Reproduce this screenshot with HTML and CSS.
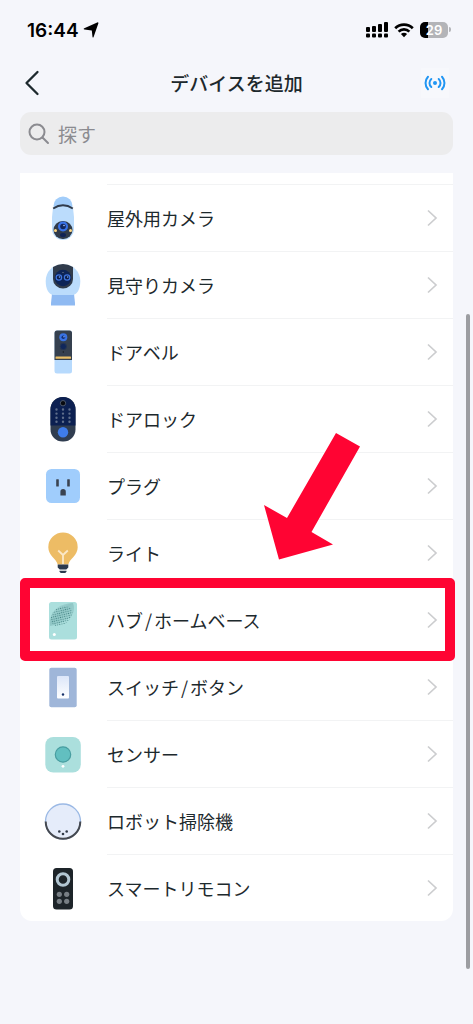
FILE: index.html
```
<!DOCTYPE html>
<html lang="ja">
<head>
    <meta charset="UTF-8">
    <meta name="viewport" content="width=device-width, initial-scale=1.0">
    <title>デバイスを追加</title>
    <link rel="stylesheet" href="styles.css">
</head>
<body>
    <div class="status-bar">
        <span class="clock">16:44</span>
        <svg class="location" width="16" height="16" viewBox="0 0 16 16"><path d="M15.400 1.200 10.600 15q-.6 1.200-1.100-.1L8.800 8.400 1.400 7.500q-1.400-.5-.1-1.200L14.200.4q1.300-.4 1.200.8z" fill="#000"/></svg>
        <div class="status-icons">
            <svg width="22" height="16" viewBox="0 0 22 16">
                <g fill="#000">
                    <rect x="0" y="5" width="4" height="5" rx="1"/><rect x="6" y="4" width="4" height="6" rx="1"/>
                    <rect x="12" y="2" width="4" height="8" rx="1"/><rect x="18" y="0" width="4" height="10" rx="1"/>
                    <rect x="0" y="11.500" width="4" height="4" rx="1"/><rect x="6" y="11.500" width="4" height="4" rx="1"/>
                    <rect x="12" y="11.500" width="4" height="4" rx="1"/><rect x="18" y="11.500" width="4" height="4" rx="1"/>
                </g>
            </svg>
            <svg width="20" height="16" viewBox="0 0 20 16">
                <path d="M1.200 6.200a12.600 12.600 0 0 1 17.600 0M4.600 9.600a7.800 7.800 0 0 1 10.800 0" fill="none" stroke="#000" stroke-width="2.700"/>
                <path d="M10 15.200 6.900 12.100a4.500 4.500 0 0 1 6.200 0z" fill="#000"/>
            </svg>
            <span class="battery">29</span>
        </div>
    </div>

    <header class="header">
        <button type="button" class="icon-button back" aria-label="戻る">
            <svg width="16" height="26" viewBox="0 0 16 26"><path d="M13.500 2 2.500 13l11 11" fill="none" stroke="#1d292d" stroke-width="2.300" stroke-linecap="round" stroke-linejoin="round"/></svg>
        </button>
        <h1>デバイスを追加</h1>
        <button type="button" class="icon-button scan" aria-label="近くのデバイスを検索">
            <svg width="22" height="18" viewBox="0 0 22 18">
                <g fill="none" stroke="#2196f3" stroke-width="2" stroke-linecap="round">
                    <path d="M7.300 5a5.300 5.300 0 0 0 0 8M14.700 5a5.300 5.300 0 0 1 0 8"/>
                    <path d="M4 2.700a9.300 9.300 0 0 0 0 12.600M18 2.700a9.300 9.300 0 0 1 0 12.600"/>
                </g>
                <circle cx="11" cy="9" r="2" fill="#2196f3"/>
            </svg>
        </button>
    </header>

    <form class="search">
        <svg width="22" height="22" viewBox="0 0 22 22"><g fill="none" stroke="#8b8b90" stroke-width="2" stroke-linecap="round"><circle cx="9" cy="9" r="7.500"/><path d="m14.500 14.500 5.500 5.500"/></g></svg>
        <input type="search" placeholder="探す" aria-label="探す">
    </form>

    <main>
        <ul class="device-list">
            <li>
                <a href="#outdoor">
                    <svg class="device" viewBox="0 0 48 48">
                        <circle cx="24" cy="12" r="9.500" fill="#a2cdfa"/>
                        <path d="M14 14q10-6 20 0l1 9v12a11 11 0 0 1-22 0V23z" fill="#bbdcfc"/>
                        <path d="M14.200 14.500q9.800-6.500 19.600 0" fill="none" stroke="#303b4b" stroke-width="2"/>
                        <rect x="14.500" y="27" width="19" height="18" rx="9" fill="#303b4b"/>
                        <circle cx="24" cy="32.500" r="5" fill="#3973e9"/><circle cx="24" cy="32.500" r="2.800" fill="#12275d"/>
                        <circle cx="25" cy="31.500" r=".8" fill="#a9c9ff"/>
                        <ellipse cx="24" cy="41" rx="3" ry="2" fill="#102355"/>
                        <circle cx="16.500" cy="36.500" r="1.500" fill="#ffd883"/><circle cx="31.500" cy="36.500" r="1.500" fill="#ffd883"/>
                    </svg>
                    <span class="name">屋外用カメラ</span>
                    <svg class="chevron" viewBox="0 0 12 18"><path d="m2 1.500 8 7.500-8 7.500"/></svg>
                </a>
            </li>
            <li>
                <a href="#indoor">
                    <svg class="device" viewBox="0 0 48 48">
                        <path d="M13 33h22l1 9v2.500H12V42z" fill="#8fbaf2"/>
                        <path d="M24 3.500C13 3.500 6.700 11 6.700 20S10 33 14 34h20c4-1 7.300-5 7.300-14S35 3.500 24 3.500z" fill="#bbdcfc"/>
                        <path d="M14 6q10-6 20 0v12a10 9.500 0 0 1-20 0z" fill="#303b4b"/>
                        <circle cx="24" cy="17" r="8.300" fill="#0d2457"/>
                        <g fill="#0b1c48" stroke="#4076df" stroke-width="1.200"><circle cx="19.900" cy="16.500" r="2.700"/><circle cx="28.100" cy="16.500" r="2.700"/></g>
                        <circle cx="20.500" cy="16" r=".8" fill="#83aff9"/><circle cx="28.700" cy="16" r=".8" fill="#83aff9"/>
                        <circle cx="24" cy="11.500" r=".6" fill="#89949e"/>
                    </svg>
                    <span class="name">見守りカメラ</span>
                    <svg class="chevron" viewBox="0 0 12 18"><path d="m2 1.500 8 7.500-8 7.500"/></svg>
                </a>
            </li>
            <li>
                <a href="#doorbell">
                    <svg class="device" viewBox="0 0 48 48">
                        <rect x="15.500" y="2.500" width="17.500" height="43" rx="2.500" fill="#b7dafd"/>
                        <path d="M15.500 32V5a2.500 2.500 0 0 1 2.500-2.500h12.500A2.500 2.500 0 0 1 33 5v27z" fill="#35404f"/>
                        <circle cx="24.300" cy="9.300" r="4" fill="#3973e5"/><circle cx="24.300" cy="9.300" r="1.800" fill="#102e78"/><circle cx="25" cy="8.800" r=".7" fill="#9dc3ff"/>
                        <circle cx="24.300" cy="18.500" r="3.200" fill="#10275b" stroke="#263653"/>
                        <circle cx="24.300" cy="24" r=".7" fill="#17191e"/>
                        <rect x="16.500" y="28.500" width="15.500" height="2.300" rx=".5" fill="#e9be66"/>
                    </svg>
                    <span class="name">ドアベル</span>
                    <svg class="chevron" viewBox="0 0 12 18"><path d="m2 1.500 8 7.500-8 7.500"/></svg>
                </a>
            </li>
            <li>
                <a href="#lock">
                    <svg class="device" viewBox="0 0 48 48">
                        <rect x="11.500" y="2" width="25" height="44.500" rx="12" fill="#303d50"/>
                        <path d="M11.500 30.500V14.500a12.500 12.500 0 0 1 25 0v16z" fill="#0c2051"/>
                        <circle cx="24" cy="8.200" r="2.700" fill="#080a0f" stroke="#49556a"/>
                        <g fill="none" stroke="#5f6e8b" stroke-width="2.400" stroke-linecap="round" stroke-dasharray="0 4.100"><path d="M17.500 14.500v13M24 14.500v13M30.500 14.500v13"/></g>
                        <circle cx="24" cy="37.200" r="5.200" fill="#3f7ce9"/>
                    </svg>
                    <span class="name">ドアロック</span>
                    <svg class="chevron" viewBox="0 0 12 18"><path d="m2 1.500 8 7.500-8 7.500"/></svg>
                </a>
            </li>
            <li>
                <a href="#plug">
                    <svg class="device" viewBox="0 0 48 48">
                        <rect x="7" y="7" width="34" height="34" rx="5.500" fill="#a0cdfc"/>
                        <g fill="#3a4350"><rect x="17.200" y="17.200" width="2.600" height="7.300" rx=".5"/><rect x="28.200" y="17.200" width="2.600" height="7.300" rx=".5"/>
                        <path d="M21.400 33.500v-3.700a2.700 2.700 0 0 1 5.400 0v3.700z"/></g>
                    </svg>
                    <span class="name">プラグ</span>
                    <svg class="chevron" viewBox="0 0 12 18"><path d="m2 1.500 8 7.500-8 7.500"/></svg>
                </a>
            </li>
            <li>
                <a href="#light">
                    <svg class="device" viewBox="0 0 48 48">
                        <path d="M24 3.500A14.700 14.700 0 0 0 9.300 18.200c0 8.300 7.700 11 9.400 17.300h10.600c1.700-6.300 9.400-9 9.400-17.300A14.700 14.700 0 0 0 24 3.500z" fill="#edbc65"/>
                        <path d="M24 35V26l-4.800-4.500M24 26l4.800-4.500" fill="none" stroke="#fbe8c8" stroke-width="1.800"/>
                        <path d="M18.700 35.500h10.600v3l-2 2h-6.600l-2-2zM20.500 41.700h7v1l-1.300 1.300h-4.400l-1.300-1.300z" fill="#2c3a4e"/>
                    </svg>
                    <span class="name">ライト</span>
                    <svg class="chevron" viewBox="0 0 12 18"><path d="m2 1.500 8 7.500-8 7.500"/></svg>
                </a>
            </li>
            <li class="highlighted">
                <a href="#hub">
                    <svg class="device" viewBox="0 0 48 48">
                        <defs>
                            <pattern id="grille" width="2.200" height="2.200" patternUnits="userSpaceOnUse" patternTransform="rotate(25)"><circle cx="1.100" cy="1.100" r=".6" fill="#3d7e7e"/></pattern>
                            <linearGradient id="hubShade" x1="0" y1="0" x2="1" y2="1"><stop offset="0" stop-color="#b1e0df"/><stop offset=".45" stop-color="#8fc6c5"/><stop offset="1" stop-color="#abdfdd"/></linearGradient>
                        </defs>
                        <rect x="10" y="6" width="28" height="37.500" rx="2.500" fill="#abdfdd"/>
                        <path d="M11 24Q14 8 34 7q4 11-7 17-8 5-16 6z" fill="url(#hubShade)"/>
                        <ellipse cx="22.500" cy="20" rx="12" ry="8.500" transform="rotate(-38 22.500 20)" fill="url(#grille)"/>
                        <circle cx="15.300" cy="38.500" r="1.500" fill="#fff"/>
                    </svg>
                    <span class="name">ハブ<span class="slash">/</span>ホームベース</span>
                    <svg class="chevron" viewBox="0 0 12 18"><path d="m2 1.500 8 7.500-8 7.500"/></svg>
                </a>
                <svg class="arrow" width="96" height="127" viewBox="0 0 96 127" aria-hidden="true"><path d="M72 0 96 13.500 47.500 99l21.500 12.500L15 126.500 0 72l23 13z" fill="#ff0433"/></svg>
            </li>
            <li>
                <a href="#switch">
                    <svg class="device" viewBox="0 0 48 48">
                        <defs><linearGradient id="switchFace" x1="0" y1="0" x2="0" y2="1"><stop offset="0" stop-color="#dce6f9"/><stop offset="1" stop-color="#fff"/></linearGradient></defs>
                        <rect x="10.300" y="4.800" width="27.400" height="39.400" rx="2" fill="#9fb6d9"/>
                        <rect x="18" y="13" width="12" height="22.500" rx="1" fill="url(#switchFace)"/>
                        <circle cx="24" cy="31.500" r="1.200" fill="#173069"/>
                    </svg>
                    <span class="name">スイッチ<span class="slash">/</span>ボタン</span>
                    <svg class="chevron" viewBox="0 0 12 18"><path d="m2 1.500 8 7.500-8 7.500"/></svg>
                </a>
            </li>
            <li>
                <a href="#sensor">
                    <svg class="device" viewBox="0 0 48 48">
                        <rect x="6.300" y="7" width="35.500" height="35.500" rx="8" fill="#abdfdd"/>
                        <circle cx="24" cy="24.500" r="7.700" fill="#62bfc0" stroke="#489da0" stroke-width="1.200"/>
                        <circle cx="24" cy="36.300" r="1.400" fill="#fff"/>
                    </svg>
                    <span class="name">センサー</span>
                    <svg class="chevron" viewBox="0 0 12 18"><path d="m2 1.500 8 7.500-8 7.500"/></svg>
                </a>
            </li>
            <li>
                <a href="#vacuum">
                    <svg class="device" viewBox="0 0 48 48">
                        <circle cx="24" cy="24.500" r="17.500" fill="#e5ecfa" stroke="#9bb9e5" stroke-width="1.300"/>
                        <path d="M6.700 24.500a17.300 17.300 0 0 0 34.600 0" fill="none" stroke="#454950" stroke-width="2"/>
                        <g fill="#303947"><circle cx="20.300" cy="34.500" r="1.300"/><circle cx="24" cy="37" r="1.300"/><circle cx="27.700" cy="34.500" r="1.300"/></g>
                    </svg>
                    <span class="name">ロボット掃除機</span>
                    <svg class="chevron" viewBox="0 0 12 18"><path d="m2 1.500 8 7.500-8 7.500"/></svg>
                </a>
            </li>
            <li>
                <a href="#remote">
                    <svg class="device" viewBox="0 0 48 48">
                        <rect x="14" y="4" width="20" height="41.500" rx="3.500" fill="#1d2429"/>
                        <circle cx="24" cy="15.500" r="5.800" fill="none" stroke="#b2c6d2" stroke-width="3"/>
                        <g fill="#777e84"><circle cx="20.300" cy="30.300" r="2.600"/><circle cx="27.700" cy="30.300" r="2.600"/><circle cx="20.300" cy="37.300" r="2.600"/><circle cx="27.700" cy="37.300" r="2.600"/></g>
                    </svg>
                    <span class="name">スマートリモコン</span>
                    <svg class="chevron" viewBox="0 0 12 18"><path d="m2 1.500 8 7.500-8 7.500"/></svg>
                </a>
            </li>
        </ul>
    </main>
    <div class="scroll-thumb"></div>
</body>
</html>
```
FILE: styles.css
```
* {
    box-sizing: border-box;
}
body {
    position: relative;
    min-height: 100vh;
    margin: 0;
    padding: 0 20px 40px;
    background-color: #f5f6fb;
    color: #1d292d;
    font-family: Inter, "Noto Sans CJK JP", sans-serif;
}
svg {
    display: block;
    flex-shrink: 0;
}
.status-bar {
    display: flex;
    align-items: center;
    height: 60px;
    padding: 0 5px 0 7px;
    color: #000;
}
.clock {
    font-size: 19px;
    font-weight: 600;
}
.location {
    margin-left: 4px;
}
.status-icons {
    display: flex;
    align-items: center;
    gap: 6px;
    margin-left: auto;
}
.battery {
    position: relative;
    width: 28px;
    height: 16px;
    border-radius: 5px;
    background: linear-gradient(to right, #000 30%, #b3b4b8 30%);
    color: #fff;
    font-size: 13px;
    font-weight: 600;
    line-height: 16px;
    text-align: center;
}
.battery::after {
    content: "";
    position: absolute;
    top: 5px;
    right: -3px;
    width: 2px;
    height: 5px;
    border-radius: 0 2px 2px 0;
    background-color: #b3b4b8;
}
.header {
    display: flex;
    align-items: center;
    justify-content: space-between;
    height: 46px;
}
.header h1 {
    margin: 0;
    font-family: "Noto Sans CJK JP", sans-serif;
    font-size: 19px;
    font-weight: 500;
    line-height: 28px;
}
.icon-button {
    display: flex;
    align-items: center;
    width: 32px;
    height: 30px;
    padding: 0;
    border: 0;
    background: none;
    cursor: pointer;
}
.back {
    padding-left: 4px;
}
.scan {
    justify-content: center;
    width: 28px;
    margin-right: 4px;
    background-color: #f7f8fc;
}
.search {
    display: flex;
    align-items: center;
    gap: 8px;
    height: 43px;
    margin: 6px 0 18px;
    padding: 0 8px;
    border-radius: 11px;
    background-color: #ececed;
}
.search input {
    flex: 1;
    min-width: 0;
    padding: 0;
    border: 0;
    outline: none;
    background: none;
    color: #1d292d;
    font-family: "Noto Sans CJK JP", sans-serif;
    font-size: 19px;
}
.search input::placeholder {
    color: #8b8b90;
}
.device-list {
    margin: 0;
    padding: 11px 0 0;
    border-radius: 0 0 12px 12px;
    background-color: #fff;
    list-style: none;
}
.device-list li {
    position: relative;
}
.device-list a {
    display: grid;
    grid-template-columns: 48px 1fr 12px;
    column-gap: 20px;
    align-items: center;
    height: 67px;
    padding: 0 15px 0 19px;
    /* divider starts under the text */
    background: linear-gradient(#f2f3f4, #f2f3f4) 87px 0 / 100% 1px no-repeat;
    color: inherit;
    text-decoration: none;
}
.device {
    width: 48px;
    height: 48px;
}
.name {
    font-family: "Noto Sans CJK JP", sans-serif;
    font-size: 18px;
    line-height: 26px;
}
.slash {
    margin: 0 2px;
}
.chevron {
    width: 12px;
    height: 18px;
    fill: none;
    stroke: #cccdcf;
    stroke-width: 1.7;
}
.device-list .highlighted {
    z-index: 1;
}
.highlighted::after {
    content: "";
    position: absolute;
    inset: -8px -2px -8px 0;
    border: 10px solid #ff0433;
    border-radius: 5px;
    pointer-events: none;
}
.arrow {
    position: absolute;
    right: 93px;
    bottom: calc(100% + 26px);
    pointer-events: none;
}
.scroll-thumb {
    position: absolute;
    right: 3px;
    bottom: 55px;
    width: 4px;
    height: 64%;
    border-radius: 2px;
    background-color: #9c9da1;
}
```
